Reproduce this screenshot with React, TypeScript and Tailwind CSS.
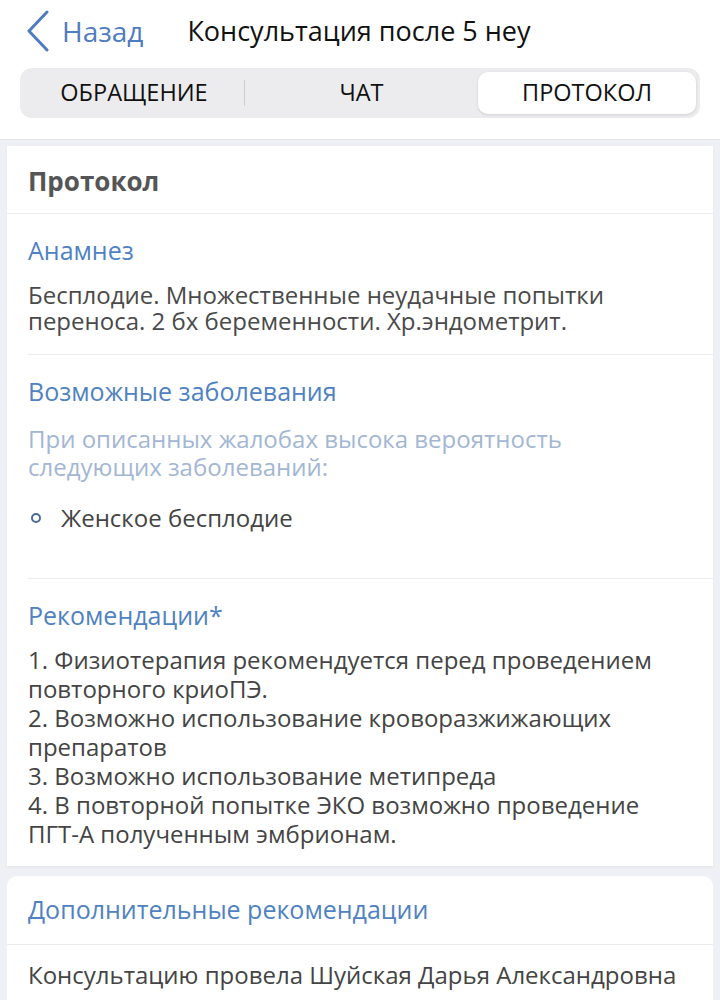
const font = { fontFamily: "'Open Sans', 'Noto Sans', sans-serif" };

const RECS = [
  "1. Физиотерапия рекомендуется перед проведением повторного криоПЭ.",
  "2. Возможно использование кроворазжижающих препаратов",
  "3. Возможно использование метипреда",
  "4. В повторной попытке ЭКО возможно проведение ПГТ-А полученным эмбрионам.",
];

const Back = () => (
  <svg width="24" height="42" viewBox="0 0 24 42" fill="none" className="ml-[26px]">
    <polyline points="21,2 3,21 21,40" stroke="#4f7bc0" strokeWidth="3" strokeLinecap="round" strokeLinejoin="round" />
  </svg>
);

const Tabs = () => {
  return (
    <div className="mx-5 flex h-[50px] items-center rounded-[12px] bg-[#ececee] p-1">
      <div className="flex w-[220px] items-center justify-center text-[23.5px] text-[#111]">ОБРАЩЕНИЕ</div>
      <div className="h-[26px] w-px bg-[#cfcfd3]" />
      <div className="flex flex-1 items-center justify-center text-[23.5px] text-[#111]">ЧАТ</div>
      <div className="flex h-full w-[218px] items-center justify-center rounded-[10px] bg-white text-[23.5px] text-[#111] shadow-[0_1px_3px_rgba(0,0,0,0.12)]">
        ПРОТОКОЛ
      </div>
    </div>
  );
};

export default function App() {
  return (
    <div className="min-h-[1000px] bg-[#eef0f6]" style={font}>
      <div className="border-b border-[#e2e4ea] bg-white pb-[21px]">
        <div className="flex h-[62px] items-center">
          <Back />
          <span className="ml-[12px] text-[28px] text-[#4f7bc0]">Назад</span>
          <span className="ml-[44px] text-[27px] text-[#111]">Консультация после 5 неу</span>
        </div>
        <div className="pt-[6px]">
          <Tabs />
        </div>
      </div>

      <div className="mx-[7px] mt-[6px] bg-white shadow-[0_1px_3px_rgba(0,0,0,0.05)]">
        <div className="flex h-[68px] items-center border-b border-[#ececf0] px-[21px] pt-[4px] text-[26px] font-bold text-[#555]">
          Протокол
        </div>

        <div className="ml-[21px] border-b border-[#ececf0] pr-[21px]">
          <div className="pt-[22px] text-[25px] leading-[28px] text-[#4f82c2]">Анамнез</div>
          <p className="pt-[18px] pb-[20px] text-[24px] leading-[26px] text-[#4a4a4a]">
            Бесплодие. Множественные неудачные попытки переноса. 2 бх беременности. Хр.эндометрит.
          </p>
        </div>

        <div className="ml-[21px] border-b border-[#ececf0] pr-[21px]">
          <div className="pt-[22px] text-[25px] leading-[28px] text-[#4f82c2]">Возможные заболевания</div>
          <p className="pt-[20px] text-[24px] leading-[28px] text-[#a3b6d3]">
            При описанных жалобах высока вероятность следующих заболеваний:
          </p>
          <div className="mt-[23px] mb-[46px] flex items-center">
            <span className="ml-[3px] h-[10px] w-[10px] rounded-full border-[2px] border-[#4a6a9a]" />
            <span className="ml-[20px] text-[24px] leading-[28px] text-[#444]">Женское бесплодие</span>
          </div>
        </div>

        <div className="ml-[21px] pr-[21px]">
          <div className="pt-[22px] text-[25px] leading-[28px] text-[#4f82c2]">Рекомендации*</div>
          <p className="pt-[16px] pb-[18px] text-[24px] leading-[29px] whitespace-pre-line text-[#444]">
            {RECS.join("\n")}
          </p>
        </div>
      </div>

      <div className="mx-[7px] mt-[10px] rounded-t-[10px] bg-white">
        <div className="flex h-[69px] items-center border-b border-[#ececf0] px-[21px] text-[25px] text-[#4f82c2]">
          Дополнительные рекомендации
        </div>
        <div className="px-[21px] pt-[16px] pb-[20px] text-[24px] leading-[28px] text-[#444]">
          Консультацию провела Шуйская Дарья Александровна
        </div>
      </div>
    </div>
  );
}
